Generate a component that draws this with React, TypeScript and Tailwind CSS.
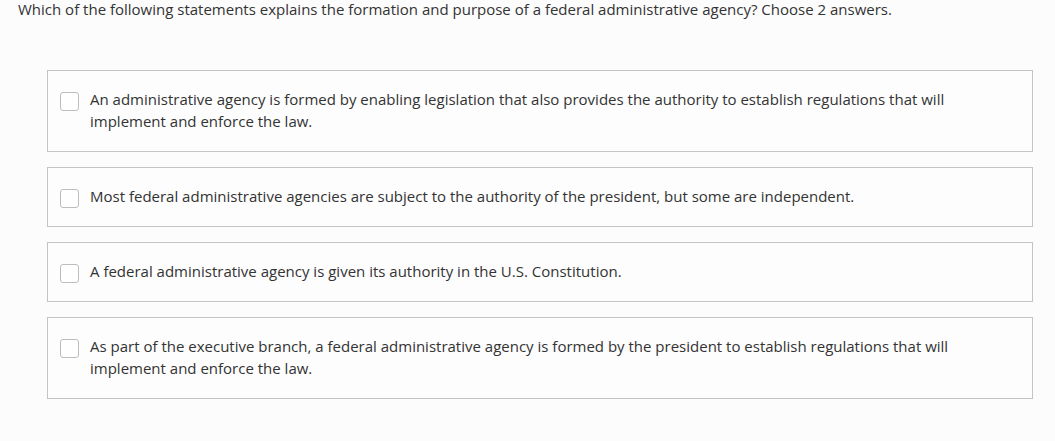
import React from 'react';

const OPTIONS = [
  'An administrative agency is formed by enabling legislation that also provides the authority to establish regulations that will implement and enforce the law.',
  'Most federal administrative agencies are subject to the authority of the president, but some are independent.',
  'A federal administrative agency is given its authority in the U.S. Constitution.',
  'As part of the executive branch, a federal administrative agency is formed by the president to establish regulations that will implement and enforce the law.',
];

const Option: React.FC<{ text: string }> = ({ text }) => {
  return (
    <label className="flex items-start gap-[11px] border border-[#c4c4c4] bg-[#fdfdfd] pl-[12px] pr-[62px] pt-[17px] pb-[19px]">
      <span className="mt-[4px] -mb-[1px] h-[19px] w-[19px] shrink-0 rounded-[3px] border border-[#bdbdbd] bg-white" />
      <span className="text-[15px] leading-[22px] text-[#333]">{text}</span>
    </label>
  );
};

export default function App() {
  return (
    <div className="min-h-[441px] w-[1055px] bg-[#fcfcfc] font-['Open_Sans',sans-serif]">
      <p className="pl-[18px] text-[15px] leading-[18px] text-[#333]">
        Which of the following statements explains the formation and purpose of a federal administrative agency? Choose 2 answers.
      </p>
      <div className="ml-[47px] mr-[22px] mt-[52px] flex flex-col gap-[15px]">
        {OPTIONS.map((o) => (
          <Option key={o} text={o} />
        ))}
      </div>
    </div>
  );
}
